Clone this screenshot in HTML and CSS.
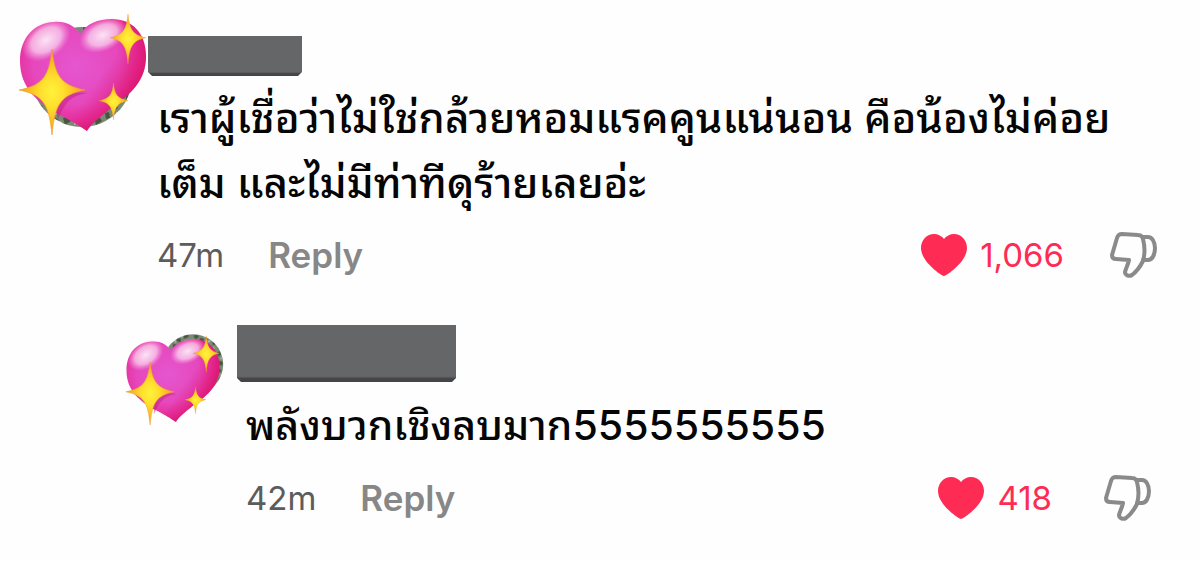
FILE: index.html
```html
<!DOCTYPE html>
<html lang="th">

<head>
    <meta charset="UTF-8">
    <meta name="viewport" content="width=device-width, initial-scale=1.0">
    <title>Comments</title>
    <link rel="stylesheet" href="styles.css">
</head>

<body>
    <!-- Shared shapes -->
    <svg class="defs" aria-hidden="true">
        <defs>
            <radialGradient id="pink" cx="0.45" cy="0.42" r="0.62">
                <stop offset="0" stop-color="#e556cf" />
                <stop offset="0.55" stop-color="#e648bd" />
                <stop offset="0.8" stop-color="#e62e9c" />
                <stop offset="1" stop-color="#d81b72" />
            </radialGradient>
            <linearGradient id="shade" x1="0.4" y1="0.4" x2="0.95" y2="0.75">
                <stop offset="0.4" stop-color="#d90a62" stop-opacity="0" />
                <stop offset="1" stop-color="#d90a52" stop-opacity="0.8" />
            </linearGradient>
            <radialGradient id="shine">
                <stop offset="0" stop-color="#fff" stop-opacity="0.85" />
                <stop offset="0.6" stop-color="#fde6f6" stop-opacity="0.65" />
                <stop offset="1" stop-color="#f9b0e4" stop-opacity="0" />
            </radialGradient>
            <radialGradient id="gold">
                <stop offset="0" stop-color="#fff23c" />
                <stop offset="0.35" stop-color="#ffdf2e" />
                <stop offset="1" stop-color="#f59a1c" />
            </radialGradient>
            <pattern id="leaves" width="31" height="23" patternUnits="userSpaceOnUse">
                <rect width="31" height="23" fill="#7b8a75" />
                <path d="M0 2l4-2 3 4-5 3zM9 5l5 1-1 5-6-2zM18 0l7 2-3 3-5 1zM25 9l4-1 1 6-4 1zM3 13l6 2-2 5-4-2zM14 14l5-2 3 5-6 4z" fill="#465740" />
                <path d="M5 8l3 1-2 3zM14 1l3 2-3 2zM19 8l4 1-3 3zM10 17l3 1-2 4zM26 17l3 2-4 2z" fill="#c3cbbf" />
            </pattern>
            <symbol id="sparkle" viewBox="0 0 66 86" preserveAspectRatio="none">
                <path d="M33 0C36 26 41 36 66 41C41 46 36 56 33 86C30 56 25 46 0 41C25 36 30 26 33 0Z" fill="url(#gold)" stroke="#f09a2a" stroke-width="0.6" />
            </symbol>
            <symbol id="sparkling-heart" viewBox="0 0 130 124">
                <path d="M62 22C56 13 47 9 36 10C15 11 2 27 2 49C2 76 20 91 42 103C55 110 62 114 69 119C73 112 81 106 92 97C113 82 128 69 128 44C128 21 114 7 94 7C80 7 68 12 62 22Z" fill="url(#pink)" />
                <path d="M62 22C56 13 47 9 36 10C15 11 2 27 2 49C2 76 20 91 42 103C55 110 62 114 69 119C73 112 81 106 92 97C113 82 128 69 128 44C128 21 114 7 94 7C80 7 68 12 62 22Z" fill="url(#shade)" />
                <ellipse cx="28" cy="28" rx="27" ry="18" fill="url(#shine)" transform="rotate(-35 28 28)" />
                <ellipse cx="85" cy="23" rx="25" ry="16" fill="url(#shine)" transform="rotate(-25 85 23)" />
                <path d="M37 90C46 82 55 79 70 81C56 83 47 88 40 108Z" fill="#bd1a78" opacity="0.45" />
                <use href="#sparkle" x="1" y="37" width="66" height="86" />
                <use href="#sparkle" x="92" y="2" width="36" height="50" />
                <use href="#sparkle" x="81" y="71" width="29" height="37" />
            </symbol>
            <symbol id="heart" viewBox="0 0 48 44">
                <path d="M24 43C22 43 1 29 1 15C1 7 7 1 14 1C18 1 22 3 24 6C26 3 30 1 34 1C41 1 47 7 47 15C47 29 26 43 24 43Z" fill="currentColor" />
            </symbol>
            <symbol id="thumb-down" viewBox="0 0 48 48">
                <g fill="none" stroke="currentColor" stroke-width="4" stroke-linejoin="round" stroke-linecap="round">
                    <path d="M12 3L28 4C31 4 32 5 33 8C35 16 35 23 33 30C30 36 26 41 22 44C19 46 15 44 15 41C16 37 18 34 19 29L6 28C3 28 2 26 2 24L7 7C8 4 9 3 12 3Z" />
                    <path d="M33 6L38 6C42 6 45 11 45 17C45 24 42 29 38 29L33 29" />
                </g>
            </symbol>
        </defs>
    </svg>

    <main class="thread">
        <article class="comment">
            <svg class="avatar" viewBox="0 0 130 124" role="img" aria-label="Avatar">
                <circle cx="64" cy="65" r="50" fill="url(#leaves)" />
                <use href="#sparkling-heart" width="130" height="124" />
            </svg>
            <div class="body">
                <div class="name"></div>
                <p class="text">เราผู้เชื่อว่าไม่ใช่กล้วยหอมแรคคูนแน่นอน คือน้องไม่ค่อย<br>เต็ม และไม่มีท่าทีดุร้ายเลยอ่ะ</p>
                <div class="meta">
                    <time class="time">47m</time>
                    <button type="button" class="reply-btn">Reply</button>
                    <button type="button" class="like"><svg class="heart" aria-hidden="true"><use href="#heart" /></svg>1,066</button>
                    <button type="button" class="dislike" aria-label="Dislike"><svg class="thumb" aria-hidden="true"><use href="#thumb-down" /></svg></button>
                </div>
            </div>
        </article>

        <article class="comment reply">
            <svg class="avatar" viewBox="0 0 130 124" role="img" aria-label="Avatar">
                <circle cx="92" cy="41" r="41" fill="url(#leaves)" />
                <use href="#sparkling-heart" width="130" height="124" />
            </svg>
            <div class="body">
                <div class="name"></div>
                <p class="text">พลังบวกเชิงลบมาก5555555555</p>
                <div class="meta">
                    <time class="time">42m</time>
                    <button type="button" class="reply-btn">Reply</button>
                    <button type="button" class="like"><svg class="heart" aria-hidden="true"><use href="#heart" /></svg>418</button>
                    <button type="button" class="dislike" aria-label="Dislike"><svg class="thumb" aria-hidden="true"><use href="#thumb-down" /></svg></button>
                </div>
            </div>
        </article>
    </main>
</body>

</html>
```
FILE: styles.css
```css
* {
    box-sizing: border-box;
}

body {
    margin: 0;
    background-color: #fefefe;
    color: #050505;
    font-family: Inter, "Noto Sans Thai Looped", Loma, Garuda, Waree, Umpush, sans-serif;
}

.defs {
    position: absolute;
    width: 0;
    height: 0;
}

.thread {
    display: flex;
    flex-direction: column;
    gap: 46px;
    padding: 12px 42px 0 18px;
}

.comment {
    display: flex;
    align-items: flex-start;
    gap: 9px;
}

.avatar {
    flex: none;
    width: 130px;
    height: 124px;
    overflow: visible;
}

.body {
    flex: 1;
    padding-top: 24px;
}

.name {
    width: 154px;
    height: 40px;
    margin-left: -9px;
    background: linear-gradient(#656668 90%, #454549 94%);
    clip-path: polygon(0 0, 100% 0, 100% calc(100% - 4px), calc(100% - 4px) 100%, 4px 100%, 0 calc(100% - 4px));
}

.text {
    margin: 9px 0 0;
    font-size: 42px;
    font-weight: 500;
    line-height: 65px;
    white-space: nowrap;
}

.meta {
    display: flex;
    align-items: center;
    height: 48px;
    margin-top: 16px;
    font-size: 33px;
}

.meta button {
    padding: 0;
    border: 0;
    background: none;
    font: inherit;
    cursor: pointer;
}

.time {
    color: #5c5c5c;
}

.meta .reply-btn {
    margin-left: 44px;
    color: #878787;
    font-size: 35px;
    font-weight: 600;
}

.meta .like {
    display: flex;
    align-items: center;
    gap: 12px;
    margin-left: auto;
    color: #fe2c55;
}

.heart {
    width: 48px;
    height: 44px;
}

.meta .dislike {
    display: flex;
    margin-left: 46px;
    color: #8a8a8a;
}

.thumb {
    width: 48px;
    height: 48px;
}

.reply {
    gap: 25px;
    padding: 0 6px 0 107px;
}

.reply .avatar {
    width: 96px;
    height: 92px;
    margin-top: 9px;
}

.reply .body {
    padding-top: 0;
}

.reply .name {
    width: 219px;
    height: 57px;
}

.reply .text {
    margin-top: 11px;
    font-size: 41px;
}

.reply .dislike {
    margin-left: 52px;
}
```
